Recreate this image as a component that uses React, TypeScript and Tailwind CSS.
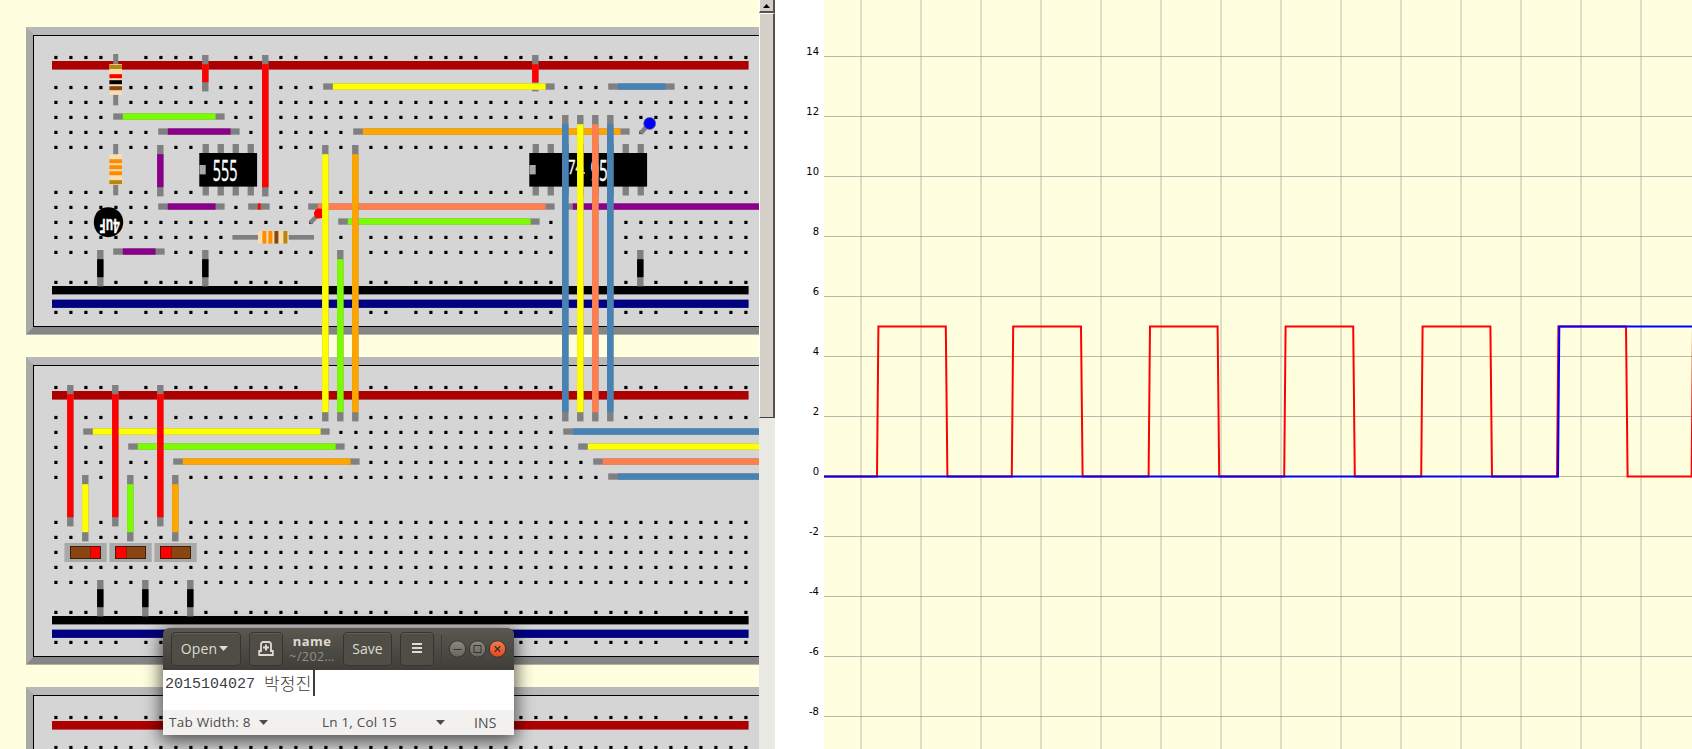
import React from "react";

const GRAY = "#808080";
const RED = "#ff0000";
const YELLOW = "#ffff00";
const GREEN = "#7cfc00";
const ORANGE = "#ffa500";
const PURPLE = "#8b008b";
const BLUE = "#4682b4";
const CORAL = "#ff7f50";

const col = (k: number) => 55.5 + 15 * k;

function HWire({ a, b, y, c }: { a: number; b: number; y: number; c: string }) {
  const x1 = col(a) - 2.3;
  const x2 = col(b) + 4.1;
  return (
    <g>
      <rect x={x1} y={y - 3.6} width={x2 - x1} height={6.3} fill={GRAY} />
      <rect x={x1 + 9.6} y={y - 3.6} width={x2 - x1 - 18.6} height={6.3} fill={c} />
    </g>
  );
}

function VWire({ k, a, b, c }: { k: number; a: number; b: number; c: string }) {
  const x = col(k) - 3.4;
  const y1 = a - 2;
  const y2 = b + 4.4;
  return (
    <g>
      <rect x={x} y={y1} width={6.4} height={y2 - y1} fill={GRAY} />
      <rect x={x} y={y1 + 9.2} width={6.4} height={y2 - y1 - 18.4} fill={c} />
    </g>
  );
}

function Board({ y }: { y: number }) {
  const holes: React.ReactElement[] = [];
  const hole = (k: number, hy: number) =>
    holes.push(<rect key={`${k}-${hy}`} x={col(k) - 1.2} y={hy - 1.2} width={3.2} height={3.2} fill="#000" />);
  for (let k = 0; k < 47; k++) {
    if (k % 6 !== 5) [57.1, 282, 312].forEach((r) => hole(k, r));
    [87.1, 102, 117, 132, 147, 192, 207, 222, 237, 252].forEach((r) => hole(k, r));
  }
  return (
    <g transform={`translate(0 ${y})`}>
      <rect x="26" y="27" width="760" height="307.4" fill="#a9a9a9" />
      <polygon points="26,27 786,27 786,35 34,35" fill="#b9b9b9" />
      <polygon points="26,334.4 786,334.4 786,326.5 34,326.5" fill="#868686" />
      <rect x="33.5" y="35.5" width="760" height="291" fill="#d5d5d5" stroke="#000" />
      <rect x="52" y="61" width="696.6" height="8.6" fill="#ad0000" />
      <rect x="52" y="286" width="696.6" height="8.4" fill="#000" />
      <rect x="52" y="299.6" width="696.6" height="8.3" fill="#000080" />
      {holes}
    </g>
  );
}

function Resistor({ x, y, bands }: { x: number; y: number; bands: [number, string][] }) {
  return (
    <g transform={`translate(${x} ${y})`}>
      <rect x="-6.3" y="0" width="12.6" height="30.7" fill="#f5deb3" />
      {bands.map(([o, c]) => (
        <rect key={o} x="-6.3" y={o} width="12.6" height="4" fill={c} />
      ))}
    </g>
  );
}

function Chip({ first, pins }: { first: number; pins: number }) {
  const x = col(first) - 6.2;
  const w = (pins - 1) * 15 + 12.8;
  return (
    <g>
      {Array.from({ length: pins }, (_, i) => (
        <rect key={i} x={col(first + i) - 2.9} y="144" width="6.3" height="51.5" fill={GRAY} />
      ))}
      <rect x={x} y="153" width={w} height="33.6" fill="#000" />
      <rect x={x + 0.2} y="165" width="6.2" height="9.4" fill="#a9a9a9" />
    </g>
  );
}

function Toggle({ x, on }: { x: number; on: boolean }) {
  return (
    <g transform={`translate(${x} 0)`}>
      <rect x="64.4" y="543" width="42.3" height="19" fill="#a9a9a9" />
      <rect x="70.5" y="546.5" width="30" height="12" fill="#8b4513" />
      <rect x={on ? 90.5 : 70.5} y="546.5" width={on ? 10 : 11} height="12" fill={RED} />
      <rect x="70.5" y="546.5" width="30" height="12" fill="none" stroke="#3d1e08" />
      <path d={on ? "M90.5 547v11" : "M81.5 547v11"} stroke="#8b2008" />
    </g>
  );
}

function Circuit() {
  return (
    <svg className="block h-[749px] w-[759px] shrink-0 bg-[#ffffe0]" viewBox="0 0 759 749">
      <Board y={0} />
      <Board y={330} />
      <Board y={660} />

      <rect x="113.2" y="54" width="5" height="51.3" fill={GRAY} />
      <Resistor x={115.7} y={64.2} bands={[[0.8, "#b8860b"], [10, RED], [16, "#000"], [22, "#8b4513"]]} />
      <rect x="113.2" y="144" width="5" height="51.3" fill={GRAY} />
      <Resistor x={115.7} y={154.2} bands={[[5, "#ff8c00"], [11, "#ff8c00"], [17, "#ff8c00"], [26, "#b8860b"]]} />
      <rect x="232.4" y="235" width="81.6" height="4.7" fill={GRAY} />
      <g transform="translate(258 237.3) rotate(-90)">
        <Resistor x={0} y={0} bands={[[4.4, "#ff8c00"], [10.4, "#ff8c00"], [16.4, "#8b4513"], [25.4, "#b8860b"]]} />
      </g>

      <VWire k={10} a={57} b={87} c={RED} />
      <HWire a={4} b={11} y={117} c={GREEN} />
      <HWire a={7} b={12} y={132} c={PURPLE} />
      <VWire k={7} a={147} b={192} c={PURPLE} />
      <Chip first={10} pins={4} />
      <text x="212.8" y="181" fontSize="30" fill="#fff" stroke="#fff" strokeWidth="0.4" textLength="24.6" lengthAdjust="spacingAndGlyphs" className="font-['Open_Sans',sans-serif]">555</text>
      <VWire k={14} a={57} b={192} c={RED} />
      <VWire k={32} a={57} b={87} c={RED} />
      <HWire a={18} b={33} y={87} c={YELLOW} />
      <HWire a={37} b={41} y={87} c={BLUE} />
      <Chip first={32} pins={8} />
      <g fill="#fff" stroke="#fff" strokeWidth="0.4" className="font-['Open_Sans',sans-serif]">
        <text x="567.8" y="174" fontSize="20" textLength="15.5" lengthAdjust="spacingAndGlyphs">74</text>
        <path d="M581 173h4" strokeWidth="1.4" />
        <text x="590.4" y="181" fontSize="30" textLength="17.4" lengthAdjust="spacingAndGlyphs">95</text>
      </g>
      <HWire a={20} b={38} y={132} c={ORANGE} />
      <HWire a={7} b={11} y={207} c={PURPLE} />
      <HWire a={13} b={14} y={207} c={RED} />
      <HWire a={17} b={33} y={207} c={CORAL} />
      <HWire a={19} b={32} y={222} c={GREEN} />
      <HWire a={34} b={50} y={207} c={PURPLE} />
      <HWire a={4} b={7} y={252} c={PURPLE} />
      <VWire k={3} a={252} b={282} c="#000" />
      <VWire k={10} a={252} b={282} c="#000" />
      <VWire k={39} a={252} b={282} c="#000" />

      <circle cx="108.2" cy="222.2" r="15" fill="#000" />
      <path d="M97 212.5a14.2 14.2 0 0 0 0 19.5a20 20 0 0 1 0-19.5" fill="#d5d5d5" stroke="#d5d5d5" strokeWidth="0.8" transform="translate(-1 0)" />
      <text x="0" y="0" fontSize="20" fontWeight="700" fill="#fff" stroke="#fff" strokeWidth="0.3" textLength="20.5" lengthAdjust="spacingAndGlyphs" transform="translate(119.8 218.8) rotate(180)" className="font-['Open_Sans',sans-serif]">4uF</text>

      <path d="M310 223L317 216" stroke={GRAY} strokeWidth="4.5" />
      <circle cx="319" cy="213.6" r="5" fill={RED} />
      <path d="M640.5 133.5L648 125" stroke={GRAY} strokeWidth="4.5" />
      <circle cx="649.7" cy="123.4" r="6" fill="#00f" stroke="#66667a" strokeWidth="0.8" />

      <HWire a={2} b={18} y={432} c={YELLOW} />
      <HWire a={5} b={19} y={447} c={GREEN} />
      <HWire a={8} b={20} y={462} c={ORANGE} />
      <VWire k={1} a={387} b={522} c={RED} />
      <VWire k={4} a={387} b={522} c={RED} />
      <VWire k={7} a={387} b={522} c={RED} />
      <VWire k={2} a={477} b={537} c={YELLOW} />
      <VWire k={5} a={477} b={537} c={GREEN} />
      <VWire k={8} a={477} b={537} c={ORANGE} />
      <HWire a={34} b={50} y={432} c={BLUE} />
      <HWire a={35} b={50} y={447} c={YELLOW} />
      <HWire a={36} b={50} y={462} c={CORAL} />
      <HWire a={37} b={50} y={477} c={BLUE} />
      <VWire k={3} a={582} b={612} c="#000" />
      <VWire k={6} a={582} b={612} c="#000" />
      <VWire k={9} a={582} b={612} c="#000" />
      <Toggle x={0} on />
      <Toggle x={45} on={false} />
      <Toggle x={90} on={false} />

      <VWire k={18} a={147} b={417} c={YELLOW} />
      <VWire k={19} a={252} b={417} c={GREEN} />
      <VWire k={20} a={147} b={417} c={ORANGE} />
      <VWire k={34} a={117} b={417} c={BLUE} />
      <VWire k={35} a={117} b={417} c={YELLOW} />
      <VWire k={36} a={117} b={417} c={CORAL} />
      <VWire k={37} a={117} b={417} c={BLUE} />
    </svg>
  );
}

function Scrollbar() {
  return (
    <div className="flex h-full w-4 shrink-0 flex-col bg-[#e9e8e3]">
      <div className="flex h-[13px] shrink-0 items-center justify-center border-r-2 border-b-2 border-l border-r-[#55534f] border-b-[#55534f] border-l-white bg-[#d4d0c8]">
        <svg className="h-[4px] w-[7px]" viewBox="0 0 7 4">
          <path d="M3.5 0L7 4H0z" fill="#000" />
        </svg>
      </div>
      <div className="h-[405px] shrink-0 border-t border-r-2 border-b border-l border-t-white border-r-[#55534f] border-b-[#404040] border-l-white bg-[#d4d0c8]" />
    </div>
  );
}

const LABELS = [14, 12, 10, 8, 6, 4, 2, 0, -2, -4, -6, -8];
const PULSES = [
  [877, 945.8], [1011.8, 1081], [1148.6, 1217.6], [1284.2, 1353.2], [1421.2, 1490.4], [1557, 1626],
];

function Scope() {
  let red = "M824 476.5";
  PULSES.forEach(([r, f]) => {
    red += `H${r}L${r + 1.4} 326.5H${f}L${f + 1.6} 476.5`;
  });
  red += "H1691.6L1693 326.5";
  return (
    <>
      <div className="flex h-full w-[49px] shrink-0 flex-col bg-white pt-[22px] pr-[5px]">
        {LABELS.map((n) => (
          <div key={n} className="flex h-[60px] shrink-0 items-center justify-end font-['DejaVu_Sans',sans-serif] text-[10px] leading-none text-black">
            {n}
          </div>
        ))}
      </div>
      <svg className="block h-[749px] w-[868px] shrink-0 bg-[#ffffe0]" viewBox="824 0 868 749">
        {LABELS.map((n) => (
          <rect key={n} x="824" y={476 - n * 30} width="868" height="1" fill="#b9b9ab" />
        ))}
        {Array.from({ length: 14 }, (_, i) => (
          <rect key={i} x={860 + i * 60} y="0" width="2" height="749" fill="#808080" opacity="0.26" />
        ))}
        <path d={red} fill="none" stroke="#f00" strokeWidth="2" />
        <path d="M824 476.5H1558L1559.3 326.5H1692" fill="none" stroke="#00f" strokeWidth="2" />
      </svg>
    </>
  );
}

const HEAD_BTN =
  "flex h-[34px] shrink-0 items-center justify-center rounded-[4px] border border-[#35342f] bg-[#4f4d46] shadow-[inset_0_1px_0_#605e57]";

function Caret() {
  return (
    <svg className="h-[5px] w-[9px] shrink-0" viewBox="0 0 9 5">
      <path d="M0 0H9L4.5 5z" fill="currentColor" />
    </svg>
  );
}

function Editor() {
  return (
    <div className="absolute top-[628px] left-[163px] flex h-[107px] w-[351px] flex-col rounded-t-[6px] font-['Open_Sans',sans-serif] shadow-[0_4px_18px_2px_rgba(0,0,0,0.65)]">
      <div className="flex h-[42px] items-center rounded-t-[6px] bg-linear-to-b from-[#5a5850] to-[#3f3e39] pl-2 text-[14px] text-[#dfdbd2]">
        <div className={`${HEAD_BTN} w-[70px] gap-[2px] pr-[3px] pb-[2px]`}>
          <span className="tracking-[0.1px]">Open</span>
          <Caret />
        </div>
        <div className={`${HEAD_BTN} ml-2 w-[34px]`}>
          <svg className="h-4 w-4" viewBox="0 0 16 16" fill="none" stroke="currentColor" strokeWidth="2">
            <path d="M3 10.5V2.5L4.5 1H11.5L13 2.5V10.5" strokeWidth="1.8" />
            <path d="M8 3.5V9.5M5 6.5H11" />
            <path d="M4 10H1.2V14H14.8V10H12" strokeWidth="1.8" />
          </svg>
        </div>
        <div className="ml-[6px] flex w-[46px] shrink-0 flex-col items-center">
          <span className="text-[13px] leading-[15px] font-bold tracking-[0.4px]">name</span>
          <span className="text-[12.5px] leading-[16px] tracking-[0.4px] whitespace-nowrap text-[#93918a]">~/202…</span>
        </div>
        <div className={`${HEAD_BTN} ml-2 w-[49px] pb-[2px]`}>Save</div>
        <div className={`${HEAD_BTN} ml-2 w-[34px] pr-px pb-[2px]`}>
          <svg className="h-[10px] w-[10px]" viewBox="0 0 10 10">
            <path d="M0 1H10M0 5H10M0 9H10" stroke="currentColor" strokeWidth="2" />
          </svg>
        </div>
        <div className="ml-[7px] h-7 w-px bg-[#3c3b36]" />
        <svg className="ml-[6px] h-[18px] w-[60px] shrink-0" viewBox="0 0 60 18">
          <defs>
            <linearGradient id="gray" x1="0" y1="0" x2="0" y2="1">
              <stop offset="0" stopColor="#8b8980" />
              <stop offset="1" stopColor="#66645d" />
            </linearGradient>
            <linearGradient id="orange" x1="0" y1="0" x2="0" y2="1">
              <stop offset="0" stopColor="#f47b55" />
              <stop offset="1" stopColor="#e0481a" />
            </linearGradient>
          </defs>
          <g stroke="#35342f">
            <circle cx="9.5" cy="9" r="8.2" fill="url(#gray)" />
            <circle cx="29.5" cy="9" r="8.2" fill="url(#gray)" />
            <circle cx="49.5" cy="9" r="8.2" fill="url(#orange)" />
            <path d="M5.5 9.5H13.5" />
            <rect x="26" y="5.5" width="7" height="7" fill="none" />
            <path d="M46.8 6.3L52.2 11.7M52.2 6.3L46.8 11.7" strokeWidth="1.3" />
          </g>
        </svg>
      </div>
      <div className="flex h-10 items-start bg-white pl-[2px] text-[#3c3c3c]">
        <div className="flex h-[26px] items-center whitespace-pre">
          <span className="pt-[5px] font-['Liberation_Mono',monospace] text-[15px]">2015104027</span>
          <span className="w-[58px] pl-[9px] font-['Noto_Sans_CJK_KR',sans-serif] text-[17px] leading-[26px] font-light tracking-[0.2px]">박정진</span>
        </div>
        <div className="h-[26px] w-[2px] shrink-0 bg-[#3c3c3c]" />
      </div>
      <div className="flex h-[25px] items-center bg-[#f2f1f0] pl-[6px] text-[13.5px] whitespace-nowrap text-[#4c4c4c]">
        <span className="w-[84px] pb-px tracking-[0.25px]">Tab Width: 8</span>
        <span className="ml-[6px] flex pb-px"><Caret /></span>
        <span className="ml-[54px] w-[76px] pb-px tracking-[0.2px]">Ln 1, Col 15</span>
        <span className="ml-[38px] flex pb-px"><Caret /></span>
        <span className="ml-[29px] text-[14px] tracking-[0.2px]">INS</span>
      </div>
    </div>
  );
}

export default function App() {
  return (
    <div className="relative flex h-[749px] w-[1692px] overflow-hidden bg-white">
      <Circuit />
      <Scrollbar />
      <Scope />
      <Editor />
    </div>
  );
}
